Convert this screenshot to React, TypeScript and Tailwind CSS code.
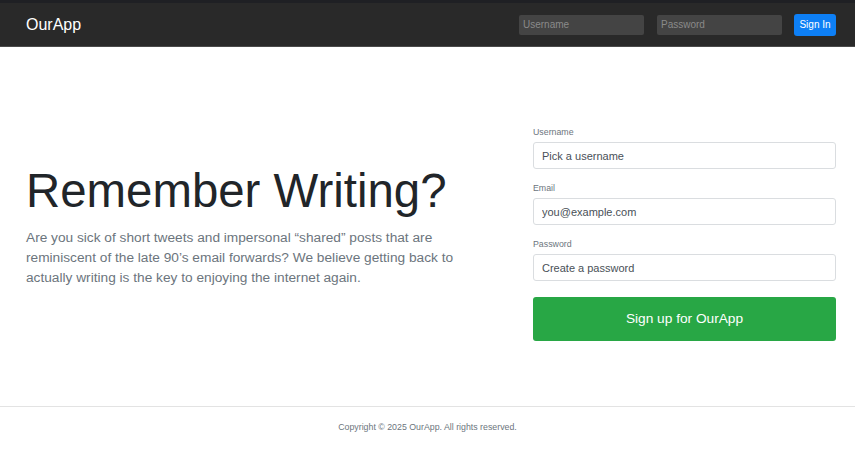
const font = { fontFamily: '"Liberation Sans", Arial, sans-serif' };

const Field = ({ label, placeholder, type = "text" }: { label: string; placeholder: string; type?: string }) => (
  <div className="mb-[13px]">
    <label className="block text-[8.8px] leading-[12px] text-[#6c757d] mb-[4px]">{label}</label>
    <input
      type={type}
      placeholder={placeholder}
      className="block w-full h-[27px] px-[8px] text-[11px] border border-[#dadde0] rounded-[3px] bg-white text-[#495057] placeholder:text-[#495057] outline-none"
    />
  </div>
);

export default function App() {
  return (
    <div className="min-h-screen flex flex-col bg-white" style={font}>
      {/* header */}
      <header className="bg-[#292929] border-t-[3px] border-[#1f2024] border-b border-b-[#4a4a4a]">
        <div className="h-[43px] flex items-center justify-between pl-[26px] pr-[19px]">
          <span className="text-white text-[16px]">OurApp</span>
          <div className="flex items-center">
            <input
              placeholder="Username"
              className="w-[125px] h-[20px] px-[4px] text-[10px] bg-[#444] text-white placeholder:text-[#8a8a8a] rounded-[2px] outline-none"
            />
            <input
              type="password"
              placeholder="Password"
              className="ml-[13px] w-[125px] h-[20px] px-[4px] text-[10px] bg-[#444] text-white placeholder:text-[#8a8a8a] rounded-[2px] outline-none"
            />
            <button className="ml-[12px] w-[42px] h-[22px] text-[10px] text-white bg-[#0d7ff5] rounded-[3px]">Sign In</button>
          </div>
        </div>
      </header>

      {/* main */}
      <main className="h-[359px] flex items-center pl-[26px] pr-[19px]">
        <div className="flex-1 pr-[30px] -mt-[2px]">
          <h1 className="text-[47.4px] leading-[56px] text-[#212529] mb-[9px]">Remember Writing?</h1>
          <p className="text-[13.7px] leading-[20px] text-[#6c757d] max-w-[440px]">
            Are you sick of short tweets and impersonal “shared” posts that are reminiscent of the late 90’s email
            forwards? We believe getting back to actually writing is the key to enjoying the internet again.
          </p>
        </div>
        <form className="w-[303px] self-start mt-[79px]">
          <Field label="Username" placeholder="Pick a username" />
          <Field label="Email" placeholder="you@example.com" />
          <Field label="Password" placeholder="Create a password" type="password" />
          <button
            type="button"
            className="mt-[3px] w-full h-[44px] bg-[#28a745] text-white text-[13.7px] rounded-[3px]"
          >
            Sign up for OurApp
          </button>
        </form>
      </main>

      {/* footer */}
      <footer className="h-[43px] border-t border-[#e3e3e3] flex items-center justify-center">
        <p className="text-[8.8px] text-[#6c757d]">Copyright © 2025 OurApp. All rights reserved.</p>
      </footer>
    </div>
  );
}
